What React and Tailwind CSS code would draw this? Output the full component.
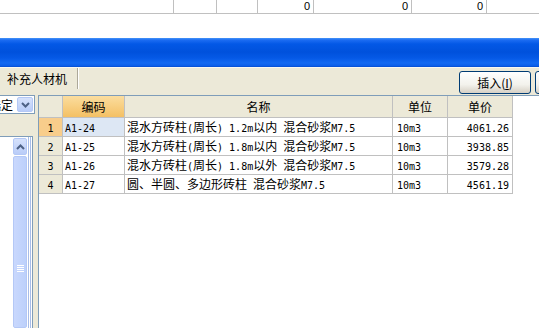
import React from 'react';

const FONT = { fontFamily: '"Noto Sans CJK SC", "Liberation Sans", sans-serif' };

const topCells = [
  { w: 'w-[174px]', v: '' },
  { w: 'w-[43px]', v: '' },
  { w: 'w-[41px]', v: '' },
  { w: 'w-[56px]', v: '0' },
  { w: 'w-[98px]', v: '0' },
  { w: 'w-[75px]', v: '0' },
];

const rows = [
  { n: '1', code: 'A1-24', name: '混水方砖柱(周长) 1.2m以内 混合砂浆M7.5', unit: '10m3', price: '4061.26' },
  { n: '2', code: 'A1-25', name: '混水方砖柱(周长) 1.8m以内 混合砂浆M7.5', unit: '10m3', price: '3938.85' },
  { n: '3', code: 'A1-26', name: '混水方砖柱(周长) 1.8m以外 混合砂浆M7.5', unit: '10m3', price: '3579.28' },
  { n: '4', code: 'A1-27', name: '圆、半圆、多边形砖柱 混合砂浆M7.5', unit: '10m3', price: '4561.19' },
];

// ascii runs in a 6px-wide mono face, like the old bitmap font
function Mixed({ text }) {
  const parts = text.match(/[\x20-\x7e]+|[^\x20-\x7e]+/g) || [];
  return (
    <span className="whitespace-pre">
      {parts.map((p, i) =>
        /^[\x20-\x7e]+$/.test(p) ? (
          <span key={i} className="text-[10px] font-['DejaVu_Sans_Mono',monospace]">{p}</span>
        ) : (
          <span key={i}>{p}</span>
        )
      )}
    </span>
  );
}

function Chevron({ up }) {
  return (
    <svg width="9" height="6" viewBox="0 0 9 6">
      <path d={up ? 'M1 5 L4.5 1.5 L8 5' : 'M1 1 L4.5 4.5 L8 1'} fill="none" stroke="#4d6185" strokeWidth="2" />
    </svg>
  );
}

export default function App() {
  return (
    <div className="w-[539px] h-[328px] overflow-hidden bg-white flex flex-col text-[12px] text-black" style={FONT}>
      {/* top sheet remnant */}
      <div className="h-[38px] shrink-0">
        <div className="flex h-[14px] border-b border-[#c0c0c0]">
          {topCells.map((c, i) => (
            <div key={i} className={`${c.w} h-full border-r border-[#c0c0c0] flex items-start justify-end pr-[3px] text-[11px] leading-[12px] font-['Liberation_Sans',sans-serif]`}>
              {c.v}
            </div>
          ))}
          <div className="flex-1" />
        </div>
      </div>

      {/* blue title bar */}
      <div className="h-[29px] shrink-0 bg-[linear-gradient(to_bottom,#4593f8_0px,#1c6cf2_2px,#0358e6_6px,#0051dc_14px,#0559e6_20px,#1269f2_25px,#0a5de8_28px,#0348c8_29px)]" />

      {/* lower beige area */}
      <div className="flex-1 bg-[#ece9d8] flex flex-col min-h-0">
        <div className="h-[28px] shrink-0 flex items-start border-t border-[#f8f7f0]">
          <div className="w-[78px] h-[21px] flex items-center pl-[7px] border-r border-[#aca899] leading-none">
            补充人材机
          </div>
          <div className="w-px h-[21px] bg-white" />
          <div className="flex-1" />
          <div className="flex gap-[4px] mt-[3px] -mr-[68px]">
            <div className="w-[72px] h-[23px] rounded-[3px] border border-[#003c74] bg-[linear-gradient(to_bottom,#ffffff,#f3f2ec_60%,#d6d0c5)] flex items-center justify-center leading-none">
              插入(<span className="underline">I</span>)
            </div>
            <div className="w-[72px] h-[23px] rounded-[3px] border border-[#003c74] bg-[linear-gradient(to_bottom,#ffffff,#f3f2ec_60%,#d6d0c5)]" />
          </div>
        </div>

        <div className="flex-1 flex min-h-0">
          {/* left panel */}
          <div className="w-[38px] shrink-0 flex flex-col">
            <div className="-ml-[30px] w-[65px] h-[19px] border border-[#7f9db9] bg-white flex items-center justify-end pr-px shrink-0">
              <span className="mr-[4px] leading-none">选定</span>
              <div className="w-[16px] h-[15px] rounded-[2px] border border-[#b4c8f6] bg-[linear-gradient(to_bottom,#d6e2fc,#b9ccf8)] flex items-center justify-center">
                <Chevron />
              </div>
            </div>
            <div className="h-[22px] shrink-0" />
            <div className="-ml-[30px] w-[63px] flex-1 border-t border-r border-[#7f9db9] bg-white flex justify-end">
              <div className="w-[14px] flex flex-col pt-px">
                <div className="h-[17px] rounded-[2px] border border-[#b4c8f6] bg-[linear-gradient(to_bottom,#d6e2fc,#b9ccf8)] flex items-center justify-center shrink-0">
                  <Chevron up />
                </div>
                <div className="flex-1 mt-px rounded-[2px] border border-[#b4c8f6] bg-[linear-gradient(to_right,#c9d8fd,#bcd0fb)] flex flex-col items-center pt-[108px]">
                  <div className="flex flex-col gap-px">
                    {[0, 1, 2, 3].map(i => (
                      <div key={i} className="w-[7px] h-px bg-white" />
                    ))}
                  </div>
                </div>
              </div>
              <div className="w-[5px] bg-[repeating-linear-gradient(to_right,#ffffff_0px,#ffffff_1px,#a8bde8_1px,#a8bde8_2px)]" />
            </div>
          </div>

          {/* grid */}
          <div className="flex-1 border-t border-l border-[#7f9db9] bg-white min-w-0">
            <div className="flex h-[22px] leading-none">
              <div className="w-[24px] h-full bg-[#ece9d8] border-r border-b border-[#c0c0c0]" />
              <div className="w-[62px] h-full bg-[linear-gradient(to_bottom,#fbdd9e,#f4c064)] border-r border-b border-[#c0c0c0] flex items-center justify-center">编码</div>
              <div className="w-[268px] h-full bg-[#ece9d8] border-r border-b border-[#c0c0c0] flex items-center justify-center">名称</div>
              <div className="w-[55px] h-full bg-[#ece9d8] border-r border-b border-[#c0c0c0] flex items-center justify-center">单位</div>
              <div className="w-[65px] h-full bg-[#ece9d8] border-r border-b border-[#c0c0c0] flex items-center justify-center">单价</div>
            </div>
            {rows.map((r, i) => (
              <div key={r.n} className="flex h-[19px] leading-none">
                <div className={`w-[24px] h-full border-r border-b border-[#c0c0c0] flex items-center justify-center ${i === 0 ? 'bg-[#f8cd8b]' : 'bg-[#ece9d8]'}`}><Mixed text={r.n} /></div>
                <div className={`w-[62px] h-full border-r border-b border-[#c0c0c0] flex items-center pl-[2px] ${i === 0 ? 'bg-[#dde7f4]' : ''}`}><Mixed text={r.code} /></div>
                <div className="w-[268px] h-full border-r border-b border-[#c0c0c0] flex items-center pl-[2px] overflow-hidden"><Mixed text={r.name} /></div>
                <div className="w-[55px] h-full border-r border-b border-[#c0c0c0] flex items-center pl-[4px]"><Mixed text={r.unit} /></div>
                <div className="w-[65px] h-full border-r border-b border-[#c0c0c0] flex items-center justify-end pr-[3px]"><Mixed text={r.price} /></div>
              </div>
            ))}
          </div>
        </div>
      </div>
    </div>
  );
}
